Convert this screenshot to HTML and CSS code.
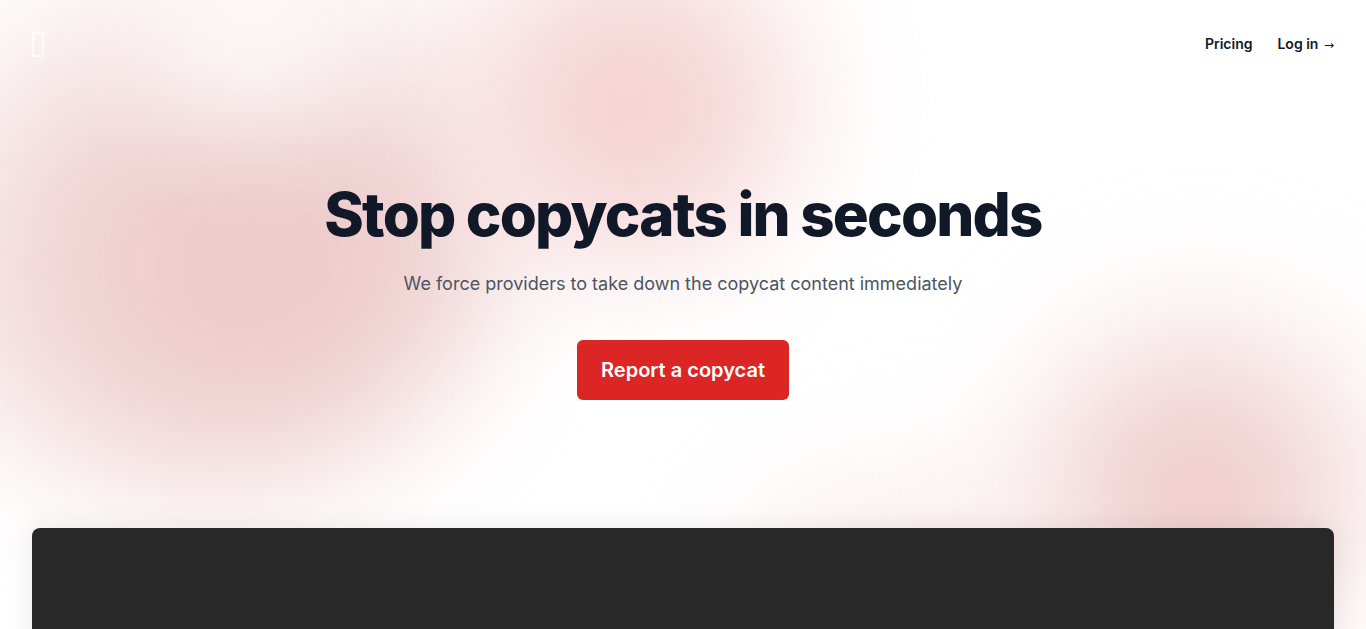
FILE: index.html
```html
<!DOCTYPE html>
<html>
<head>
    <title>Copycat Killer</title>
    <link rel="stylesheet" href="styles.css">
</head>
<body>

    <div class="backdrop">
        <div class="blob blob-left"></div>
        <div class="blob blob-top"></div>
        <div class="blob blob-right"></div>
        <div class="blob blob-low"></div>
        <div class="blob blob-white"></div>
    </div>

    <header class="nav">
        <a class="logo" href="#">
            <svg width="12" height="25" viewBox="0 0 12 25"><rect x="1" y="1" width="10" height="23" fill="none" stroke="#fff" stroke-width="1.4"/></svg>
        </a>
        <nav class="links">
            <a href="#">Pricing</a>
            <a href="#">Log in <span class="arrow">&rarr;</span></a>
        </nav>
    </header>

    <section class="hero">
        <h1>Stop copycats in seconds</h1>
        <p>We force providers to take down the copycat content immediately</p>
        <a class="cta" href="#">Report a copycat</a>
    </section>

    <div class="preview"></div>

</body>
</html>
```

FILE: styles.css
```css
* {
    box-sizing: border-box;
}

body {
    margin: 0;
    font-family: Inter, "Noto Sans", sans-serif;
    background-color: #fff;
    color: #111827;
    overflow: hidden;
}

a {
    text-decoration: none;
    color: inherit;
}

/* soft pink glow behind the hero */
.backdrop {
    position: absolute;
    top: 0;
    left: 0;
    width: 1366px;
    height: 629px;
    overflow: hidden;
    z-index: -1;
}

.blob {
    position: absolute;
    border-radius: 50%;
    filter: blur(60px);
}

.blob-left {
    left: -130px;
    top: -60px;
    width: 640px;
    height: 560px;
    background: radial-gradient(ellipse at 60% 58%, #eac4c4 0%, #f2d6d6 40%, rgba(250, 235, 235, 0) 75%);
}

.blob-top {
    left: 430px;
    top: -90px;
    width: 400px;
    height: 360px;
    background: radial-gradient(ellipse at 50% 55%, #f3cccc 0%, #f7dbdb 45%, rgba(252, 240, 240, 0) 75%);
}

.blob-white {
    left: 110px;
    top: -50px;
    width: 280px;
    height: 180px;
    background: radial-gradient(ellipse at center, #ffffff 0%, rgba(255, 255, 255, 0.85) 45%, rgba(255, 255, 255, 0) 75%);
}

.blob-right {
    left: 1000px;
    top: 290px;
    width: 400px;
    height: 360px;
    background: radial-gradient(ellipse at 50% 58%, #ecc6c6 0%, #f3d6d6 40%, rgba(252, 240, 240, 0) 75%);
}

.blob-low {
    left: 700px;
    top: 460px;
    width: 440px;
    height: 200px;
    background: radial-gradient(ellipse at center, #f8e2e2 0%, rgba(252, 240, 240, 0) 75%);
}

.nav {
    display: flex;
    justify-content: space-between;
    align-items: center;
    padding: 30px 32px 0 32px;
    height: 58px;
}

.logo {
    display: flex;
}

.links {
    display: flex;
    gap: 25px;
    font-size: 14px;
    font-weight: 600;
    line-height: 20px;
    color: #111827;
}

.arrow {
    margin-left: 2px;
    font-family: "DejaVu Sans", sans-serif;
    font-weight: 400;
    font-size: 12px;
}

.hero {
    display: flex;
    flex-direction: column;
    align-items: center;
    text-align: center;
    padding-top: 126px;
}

.hero h1 {
    margin: 0;
    font-size: 60px;
    line-height: 60px;
    font-weight: 800;
    letter-spacing: -1.8px;
    color: #111827;
}

.hero p {
    margin: 26px 0 0 0;
    font-size: 18px;
    line-height: 28px;
    color: #4b5563;
}

.cta {
    margin-top: 42px;
    padding: 0 24px;
    height: 60px;
    line-height: 60px;
    border-radius: 6px;
    background-color: #dc2626;
    color: #fff;
    font-size: 20px;
    font-weight: 600;
}

.preview {
    margin: 128px 32px 0 32px;
    height: 200px;
    background-color: #282828;
    border-radius: 8px;
    box-shadow: 0 0 30px rgba(0, 0, 0, 0.08);
}
```
